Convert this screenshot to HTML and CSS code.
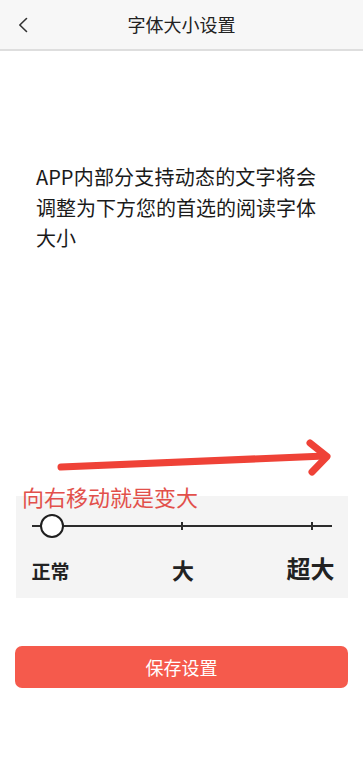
FILE: index.html
```html
<!DOCTYPE html>
<html lang="zh-CN">
<head>
<meta charset="utf-8">
<title>字体大小设置</title>
<link rel="stylesheet" href="styles.css">
</head>
<body>
<div class="page">
  <header class="topbar">
    <button class="back" aria-label="返回">
      <svg width="10" height="16" viewBox="0 0 10 16"><polyline points="8.5,1.5 1.8,8 8.5,14.5" fill="none" stroke="#333" stroke-width="1.6" stroke-linecap="round" stroke-linejoin="round"/></svg>
    </button>
    <h1 class="title">字体大小设置</h1>
    <span class="spacer"></span>
  </header>

  <main class="content">
    <p class="intro"><span class="first">APP内部分支持动态的文字将会</span>调整为下方您的首选的阅读字体大小</p>

    <section class="panel">
      <div class="slider">
        <div class="track"></div>
        <span class="tick tick-mid"></span>
        <span class="tick tick-end"></span>
        <span class="knob"></span>
      </div>
      <div class="labels">
        <span class="lbl lbl-s">正常</span>
        <span class="lbl lbl-m">大</span>
        <span class="lbl lbl-l">超大</span>
      </div>
    </section>

    <button class="save">保存设置</button>
  </main>

  <svg class="arrow" width="300" height="50" viewBox="50 435 300 50">
    <path d="M61 467 L325 456" fill="none" stroke="#ef4237" stroke-width="7" stroke-linecap="round"/>
    <path d="M310 443 L327 456.5 L312 472" fill="none" stroke="#ef4237" stroke-width="7" stroke-linecap="round" stroke-linejoin="round"/>
  </svg>
  <div class="note">向右移动就是变大</div>
</div>
</body>
</html>
```

FILE: styles.css
```css
* { box-sizing: border-box; }
html, body { margin: 0; padding: 0; background: #fff; }
body {
  font-family: "Noto Sans CJK SC", "Noto Sans", sans-serif;
  color: #222;
}
.page { position: relative; width: 363px; min-height: 768px; }

.topbar {
  display: grid;
  grid-template-columns: 48px 1fr 48px;
  align-items: center;
  height: 51px;
  background: #f7f7f7;
  border-bottom: 2px solid #dedede;
}
.back {
  border: 0; background: transparent; padding: 0 0 0 18px;
  height: 49px; display: flex; align-items: center; cursor: pointer;
}
.back svg { display: block; }
.title {
  margin: 0; text-align: center;
  font-size: 18px; font-weight: 400; color: #222;
  line-height: 49px;
}

.content { display: flex; flex-direction: column; align-items: center; }

.intro {
  align-self: flex-start;
  width: 280px;
  margin: 111px 0 0 36px;
  font-size: 20px;
  line-height: 30.5px;
  color: #1a1a1a;
}
.intro .first { display: block; text-align: justify; text-align-last: justify; }

.panel {
  width: 332px;
  margin-top: 242px;
  background: #f4f4f4;
  padding: 18px 16px 18px;
}
.slider { position: relative; height: 24px; }
.track {
  position: absolute; left: 0; right: 0; top: 11px;
  height: 2px; background: #2b2b2b;
}
.tick {
  position: absolute; top: 8px; width: 2px; height: 8px; background: #2b2b2b;
}
.tick-mid { left: 149px; }
.tick-end { left: 279px; }
.knob {
  position: absolute; left: 8px; top: 0;
  width: 24px; height: 24px; border-radius: 50%;
  background: #fff; border: 2px solid #1f1f1f;
}
.labels {
  display: grid;
  grid-template-columns: 1fr auto 1fr;
  align-items: end;
  margin-top: 18px;
  height: 24px;
  margin-right: -3px;
}
.lbl { font-weight: 700; color: #222; line-height: 1; }
.lbl-s { font-size: 19px; justify-self: start; }
.lbl-m { font-size: 22px; justify-self: center; }
.lbl-l { font-size: 24px; justify-self: end; }

.save {
  width: 333px; height: 42px;
  margin-top: 48px;
  border: 0; border-radius: 7px;
  background: #f55a4c; color: #fff;
  font-family: inherit; font-size: 18px;
  cursor: pointer;
}

.arrow { position: absolute; left: 50px; top: 435px; }
.note {
  position: absolute; left: 22px; top: 484px;
  font-size: 22px; line-height: 24px;
  color: #e2504b;
}
```
